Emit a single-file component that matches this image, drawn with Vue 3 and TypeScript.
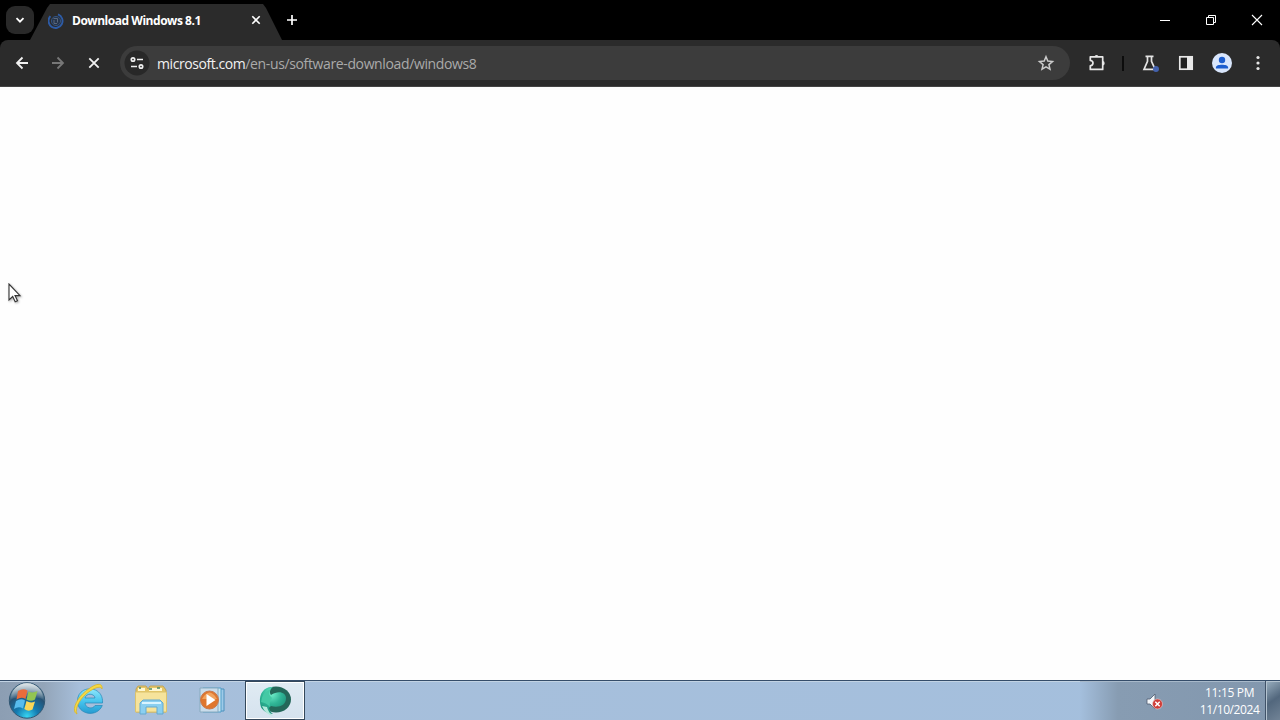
<script setup lang="ts">
import { ref } from 'vue'

const tabTitle = ref('Download Windows 8.1')
const host = ref('microsoft.com')
const path = ref('/en-us/software-download/windows8')
const time = ref('11:15 PM')
const date = ref('11/10/2024')
</script>

<template>
  <div class="screen">
    <header class="tabstrip">
      <button class="tab-search" aria-label="Search tabs">
        <svg width="28" height="28" viewBox="0 0 28 28"><path d="M10.5 12.2 14 15.7l3.5-3.5" fill="none" stroke="#fff" stroke-width="1.8" /></svg>
      </button>
      <div class="tab">
        <svg class="spinner" width="16" height="16" viewBox="0 0 16 16">
          <path d="M2.4 3.2A7 7 0 1 0 10 1.4" fill="none" stroke="#2d5ba6" stroke-width="1.9" />
          <circle cx="8" cy="8" r="4.6" fill="#26354c" stroke="#34527e" stroke-width="1" />
          <path d="M5.5 5.5h4v4M6 7v3.5h3" fill="none" stroke="#5b687a" stroke-width="1" />
        </svg>
        <span class="tab-title">{{ tabTitle }}</span>
        <svg class="tab-close" width="10" height="10" viewBox="0 0 10 10"><path d="m1.3 1.3 7.4 7.4m0-7.4L1.3 8.7" stroke="#fff" stroke-width="1.6" /></svg>
      </div>
      <svg class="new-tab" width="12" height="12" viewBox="0 0 12 12"><path d="M6 1v10M1 6h10" stroke="#fff" stroke-width="1.7" /></svg>
      <div class="window-controls">
        <svg width="46" height="40" viewBox="0 0 46 40"><path d="M18 20.5h10" stroke="#fff" /></svg>
        <svg width="46" height="40" viewBox="0 0 46 40"><path d="M18.5 17.5h7v7h-7zM20.5 17.5v-2h7v7h-2" fill="none" stroke="#fff" /></svg>
        <svg width="46" height="40" viewBox="0 0 46 40"><path d="m18 15 10 10m0-10L18 25" stroke="#fff" stroke-width="1.1" /></svg>
      </div>
    </header>

    <nav class="toolbar">
      <div class="nav-buttons">
        <svg width="36" height="36" viewBox="0 0 36 36"><path d="M28 18H17m5.5-5.5L17 18l5.5 5.5" fill="none" stroke="#f2f2f2" stroke-width="1.8" /></svg>
        <svg width="36" height="36" viewBox="0 0 36 36"><path d="M16 18h11m-5.5-5.5L27 18l-5.500 5.500" fill="none" stroke="#777" stroke-width="1.8" /></svg>
        <svg width="36" height="36" viewBox="0 0 36 36"><path d="m17.3 13.3 9.4 9.4m0-9.400-9.400 9.400" stroke="#f2f2f2" stroke-width="1.8" /></svg>
      </div>
      <div class="omnibox">
        <svg class="site-info" width="26" height="26" viewBox="0 0 26 26">
          <circle cx="13" cy="13" r="12.5" fill="#282828" />
          <g fill="none" stroke="#eee" stroke-width="1.7"><circle cx="9" cy="9.5" r="1.7" /><path d="M13 9.500h6M7 16.500h6" /><circle cx="17" cy="16.500" r="1.7" /></g>
        </svg>
        <span class="url"><b>{{ host }}</b>{{ path }}</span>
        <svg class="star" width="18" height="18" viewBox="0 0 18 18"><path d="m9 2.800 1.800 4.300 4.700.4-3.600 3.100 1.100 4.600L9 12.800l-4 2.400 1.100-4.600-3.600-3.100 4.700-.4z" fill="none" stroke="#ccc" stroke-width="1.500" /></svg>
      </div>
      <div class="actions">
        <svg class="puzzle" width="20" height="20" viewBox="0 0 20 20"><path d="M3.300 3.800h12.400v12.600H3.300v-3.600q2.700-.4 2.700-2.700T3.300 7.400z" fill="none" stroke="#e8e8e8" stroke-width="1.700" stroke-linejoin="round" /><path d="M7.500 4a2 2 0 0 1 4 0zM15.500 8a2.200 2.200 0 0 1 0 4.400z" fill="#e8e8e8" /></svg>
        <i class="divider"></i>
        <svg class="flask" width="20" height="20" viewBox="0 0 20 20"><path d="M5.500 3.300h8M7.500 3.300v5L4 16.300h11.200l-3.700-8v-5" fill="none" stroke="#e4e4e4" stroke-width="1.700" /><circle cx="16" cy="16" r="3" fill="#4361ad" /></svg>
        <svg class="panel" width="16" height="16" viewBox="0 0 16 16"><rect x="1.800" y="1.800" width="12.400" height="12.400" fill="#202020" stroke="#e8e8e8" stroke-width="1.700" /><path d="M9 1h6v14H9z" fill="#e8e8e8" /></svg>
        <svg class="profile" width="20" height="20" viewBox="0 0 20 20"><circle cx="10" cy="10" r="10" fill="#d9e6fc" /><circle cx="10" cy="7" r="3.200" fill="#1c5dce" /><path d="M3.900 15.500v-1.400c0-3.300 12.200-3.300 12.200 0v1.400z" fill="#1c5dce" /></svg>
        <svg class="menu" width="6" height="16" viewBox="0 0 6 16" fill="#e6e6e6"><circle cx="3" cy="2.500" r="1.600" /><circle cx="3" cy="8" r="1.600" /><circle cx="3" cy="13.500" r="1.600" /></svg>
      </div>
    </nav>

    <main class="page"></main>

    <footer class="taskbar">
      <div class="start">
        <svg width="40" height="39" viewBox="0 0 40 39">
          <defs>
            <radialGradient id="orb" cx=".5" cy=".95" r=".9"><stop offset="0" stop-color="#38d6f2" /><stop offset=".35" stop-color="#147bb1" /><stop offset=".7" stop-color="#265274" /><stop offset="1" stop-color="#9bb1bc" /></radialGradient>
            <linearGradient id="gloss" x2="0" y2="1"><stop stop-color="#fff" stop-opacity=".65" /><stop offset="1" stop-color="#fff" stop-opacity=".05" /></linearGradient>
          </defs>
          <circle cx="20" cy="19.500" r="17.700" fill="url(#orb)" stroke="#315773" />
          <path d="M4 18a16 16 0 0 1 32 0q-16-5-32 0z" fill="url(#gloss)" />
          <path d="M11 10q5-3 9.500-.5L18.500 18q-4-2.500-9 .5z" fill="#e96c3b" />
          <path d="M21.500 10.500q4.500 2 9-.5l-2.500 8.500q-4 2.500-8.500 0z" fill="#92c552" />
          <path d="M9 20q5-3 9-.5l-2 8q-4.500-2.500-9 .5z" fill="#58bced" />
          <path d="M19.500 20q4 2.500 8.500.5l-2.500 8q-4 2.500-8.200-.5z" fill="#fad657" />
        </svg>
      </div>
      <div class="launch">
        <svg width="34" height="34" viewBox="0 0 34 34">
          <defs><linearGradient id="ie" x2="0" y2="1"><stop stop-color="#8fe7fc" /><stop offset=".55" stop-color="#43c1eb" /><stop offset="1" stop-color="#269bd1" /></linearGradient></defs>
          <path d="M30.500 20H13c.4 5.500 8 6.500 10 2.500h7.300C25 35 5.500 32 5.500 18 5.500 1 32 2 30.500 20zM13 15h10c-.6-5-9-5-10 0z" fill="url(#ie)" fill-rule="evenodd" stroke="#2588b8" stroke-width=".7" />
          <path d="M5 31C-2 28 6 12 18 5 25 0 31 0 30 6c-1-3-6-2-12 2C9 14 2 25 5 31z" fill="#f6d843" stroke="#d7b52c" stroke-width=".8" />
        </svg>
        <svg width="34" height="34" viewBox="0 0 34 34">
          <path d="M2 6 4 3h8l2 3 2-3h13l3 4v22H2z" fill="#e6c767" stroke="#bfa45b" />
          <path d="M4 5h7v3H4zm11 0h13v3H15z" fill="#fff8d1" />
          <path d="M5 5h2m8 1h3m5-1h3" stroke="#4d8966" stroke-width="1.500" />
          <path d="M1.500 9h31v20h-31z" fill="#f6e39b" stroke="#dcc36d" />
          <path d="M6 31V20l3-3h17l3 3v11h-6v-7H12v7z" fill="#8acff0" stroke="#64a9cf" />
          <path d="M8 20h19" stroke="#d9f4ff" stroke-width="2" />
        </svg>
        <svg width="34" height="34" viewBox="0 0 34 34">
          <path d="M9 6h19v22H12z" fill="#9ecae8" stroke="#4d91bd" /><path d="M7 5h18v24H7z" fill="#c8e5f2" stroke="#509dc8" /><path d="M4 5h18v24H4z" fill="#c9dceb" stroke="#87aabf" />
          <circle cx="13.500" cy="17" r="9" fill="#df762e" stroke="#c8794d" /><path d="M6 16q7.500-13 15 0z" fill="#f1a35e" /><path d="m10.500 11 9 6-9 6z" fill="#fff" />
        </svg>
      </div>
      <div class="active-app">
        <svg width="34" height="34" viewBox="0 0 34 34">
          <defs><radialGradient id="green" cx=".45" cy=".25" r=".75"><stop stop-color="#73f0cc" /><stop offset=".5" stop-color="#30b596" /><stop offset="1" stop-color="#198b74" /></radialGradient></defs>
          <ellipse cx="18" cy="15.500" rx="15" ry="13" fill="#246759" />
          <path d="M2 18C1 9 7 2 15 3c-3 2-4 5-2 8 7-5 15-3 15 3 0 8-8 10-15 8l-2 2q1 4 4 6Q2 28 2 18z" fill="url(#green)" />
          <path d="M3 18Q4 8 13 5q-4 5 1 9-3 5-2 9-3-4-9-5z" fill="#45c9a5" />
          <path d="M9 23q1 5 6 9-8-2-11-10z" fill="#b2e9db" />
        </svg>
      </div>
      <div class="tray">
        <svg class="volume" width="20" height="20" viewBox="0 0 20 20"><path d="M2 7h3l5-5v15l-5-5H2z" fill="#f5f7fa" stroke="#4e5c70" stroke-width=".8" /><circle cx="12.500" cy="12" r="5" fill="#cf3c37" stroke="#ead0cf" stroke-width=".6" /><path d="m10.300 9.800 4.400 4.400m0-4.400-4.400 4.400" stroke="#fff" stroke-width="1.500" /></svg>
        <div class="clock"><span>{{ time }}</span><span class="date">{{ date }}</span></div>
        <i class="show-desktop"></i>
      </div>
    </footer>

    <svg class="cursor" width="14" height="21" viewBox="0 0 14 21"><path d="M1 1v16l3.700-3.500 2.500 5.300 2.300-1-2.500-5.200h5z" fill="#fff" stroke="#333" stroke-width="1.100" /></svg>
  </div>
</template>

<style scoped>
.screen { width: 1280px; height: 720px; display: flex; flex-direction: column; position: relative; overflow: hidden; background: #000; font-family: "Open Sans", "Noto Sans", sans-serif; }
svg { display: block; flex: none; }
.tabstrip { height: 40px; display: flex; align-items: center; flex: none; }
.tab-search { margin: 0 0 0 6px; width: 28px; height: 28px; padding: 0; border: 0; border-radius: 9px; background: #292929; }
.tab { width: 252px; height: 36px; margin-left: -4px; align-self: flex-end; display: flex; align-items: center; background: #2b2b2b; clip-path: polygon(0 100%, 17px 4px, 20px 0, 233px 0, 236px 4px, 252px 100%); }
.spinner { margin: -3px 8px 0 18px; }
.tab-title { width: 179px; margin-top: -2px; color: #fff; font-size: 12px; line-height: 18px; font-weight: 700; letter-spacing: -.47px; white-space: nowrap; }
.tab-close { margin-top: -4px; }
.new-tab { margin-left: 4px; }
.window-controls { display: flex; margin-left: auto; }
.toolbar { height: 47px; flex: none; display: flex; align-items: center; background: #2b2b2b; border-radius: 8px 8px 0 0; border-bottom: 1px solid #444; box-sizing: border-box; }
.nav-buttons { display: flex; width: 120px; }
.omnibox { width: 950px; height: 34px; border-radius: 17px; background: #3c3c3c; display: flex; align-items: center; }
.site-info { margin-left: 4px; }
.url { margin: 1px 0 0 7px; color: #aaa; font-size: 14px; line-height: 20px; letter-spacing: -.37px; white-space: nowrap; }
.url b { color: #f1f1f1; font-weight: 400; letter-spacing: -.43px; }
.star { margin-left: auto; margin-right: 15px; }
.actions { flex: 1; display: flex; align-items: center; }
.puzzle { margin-left: 17px; }
.divider { width: 2px; height: 15px; background: #0c0c0c; margin-left: 15px; }
.flask { margin-left: 16px; }
.panel { margin-left: 18px; }
.profile { margin-left: 18px; }
.menu { margin-left: 23px; }
.page { flex: 1; background: #fefefe; }
.taskbar { height: 40px; flex: none; box-sizing: border-box; display: flex; border-top: 1px solid #354d6a; background: linear-gradient(90deg, #8c9eb3 0, #93a5b9 44px, #a7bfdb 80px, #a4bfdd 100%); box-shadow: inset 0 1px #c2d3e4; }
.start { width: 72px; padding-left: 7px; box-sizing: border-box; }
.launch { width: 173px; display: flex; gap: 28px; padding-top: 2px; box-sizing: border-box; }
.active-app { width: 60px; height: 39px; box-sizing: border-box; display: grid; place-items: center; border: 1px solid #34485b; background: linear-gradient(#e0ebf3, #d5e2ee); box-shadow: inset 0 0 0 1px #fff; }
.tray { width: 200px; margin-left: auto; display: flex; align-items: center; background: linear-gradient(90deg, #a4bfdd, #879cb2 38px, #8297ae 100%); box-shadow: inset 0 1px #a8b9ca; }
.volume { margin-left: 65px; margin-top: 2px; }
.clock { width: 72px; margin-left: 29px; display: flex; flex-direction: column; align-items: center; color: #fff; font-size: 12px; line-height: 17px; letter-spacing: -.3px; white-space: nowrap; }
.date { letter-spacing: -.42px; }
.show-desktop { width: 15px; height: 39px; margin-left: auto; box-sizing: border-box; border-left: 1px solid #405268; background: linear-gradient(145deg, #9aafc0, #52677d 50%, #718396); box-shadow: inset 1px 1px #b4c3d0; }
.cursor { position: absolute; left: 8px; top: 283px; filter: drop-shadow(1px 1px 1px #aaa); }
</style>

<style>
body { margin: 0; }
</style>
